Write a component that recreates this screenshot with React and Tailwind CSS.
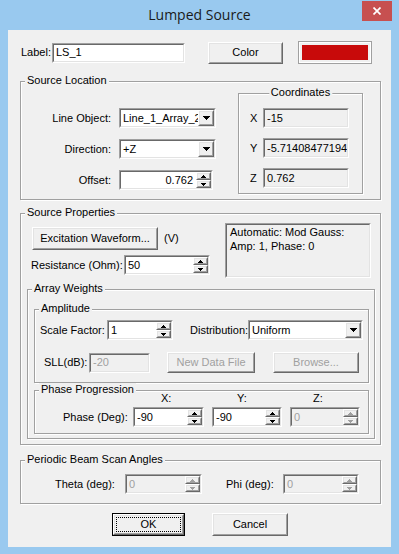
import React from "react";

// classic 3D edges (outer / inner rings)
const SUNK_OUT = "border-t-[#a0a0a0] border-l-[#a0a0a0] border-r-white border-b-white";
const SUNK_IN = "border-t-[#696969] border-l-[#696969] border-r-[#e3e3e3] border-b-[#e3e3e3]";
const RAISE_OUT = "border-t-white border-l-white border-r-[#696969] border-b-[#696969]";
const RAISE_IN = "border-t-[#e3e3e3] border-l-[#e3e3e3] border-r-[#a0a0a0] border-b-[#a0a0a0]";

const BigArrow = () => (
  <svg width="7" height="4" viewBox="0 0 7 4" shapeRendering="crispEdges">
    <rect x="0" y="0" width="7" height="1" fill="#000" />
    <rect x="1" y="1" width="5" height="1" fill="#000" />
    <rect x="2" y="2" width="3" height="1" fill="#000" />
    <rect x="3" y="3" width="1" height="1" fill="#000" />
  </svg>
);

const SmallArrow = ({ up, disabled }) => {
  const c = disabled ? "#a0a0a0" : "#000";
  return (
    <svg width="5" height="3" viewBox="0 0 5 3" shapeRendering="crispEdges">
      <rect x="0" y={up ? 2 : 0} width="5" height="1" fill={c} />
      <rect x="1" y="1" width="3" height="1" fill={c} />
      <rect x="2" y={up ? 0 : 2} width="1" height="1" fill={c} />
    </svg>
  );
};

const Button = ({ w, h = "h-[23px]", className = "", disabled, children }) => (
  <div className={`${w} ${h} border ${RAISE_OUT} bg-[#f0f0f0] shrink-0 ${className}`}>
    <div
      className={`w-full h-full border ${RAISE_IN} flex items-center justify-center ${
        disabled ? "text-[#a0a0a0]" : ""
      }`}
    >
      {children}
    </div>
  </div>
);

const SpinBtn = ({ up, disabled }) => (
  <div className={`w-[15px] h-[8px] border ${RAISE_OUT} bg-[#f0f0f0]`}>
    <div className={`w-full h-full border ${RAISE_IN} flex items-center justify-center`}>
      <SmallArrow up={up} disabled={disabled} />
    </div>
  </div>
);

const Edit = ({ w, h = "h-[20px]", value, right, disabled, readOnly, spin, combo, className = "" }) => (
  <div
    className={`${w} ${h} border ${SUNK_OUT} shrink-0 ${
      disabled || readOnly ? "bg-[#f0f0f0]" : "bg-white"
    } ${className}`}
  >
    <div className={`w-full h-full border ${SUNK_IN} flex`}>
      <div
        className={`flex-1 min-w-0 overflow-hidden whitespace-nowrap flex items-center ${
          right ? "justify-end pr-[3px]" : "pl-[2px]"
        } ${disabled ? "text-[#a0a0a0]" : ""}`}
      >
        {value}
      </div>
      {spin && (
        <div className="flex flex-col">
          <SpinBtn up disabled={disabled} />
          <SpinBtn disabled={disabled} />
        </div>
      )}
      {combo && (
        <div className={`w-[16px] h-full border ${RAISE_OUT} bg-[#f0f0f0]`}>
          <div className={`w-full h-full border ${RAISE_IN} flex items-center justify-center`}>
            <BigArrow />
          </div>
        </div>
      )}
    </div>
  </div>
);

// etched group box, caption sits over the top line
const Group = ({ title, center, className = "", children }) => (
  <div
    className={`relative border border-[#a0a0a0] shadow-[inset_1px_1px_0_#fff,1px_1px_0_#fff] shrink-0 ${className}`}
  >
    <span
      className={`absolute -top-[8px] px-[2px] bg-[#f0f0f0] leading-[13px] whitespace-nowrap ${
        center ? "left-1/2 -translate-x-1/2" : "left-[4px]"
      }`}
    >
      {title}
    </span>
    {children}
  </div>
);

export default function App() {
  return (
    <div className="w-[399px] h-[554px] bg-[#99c9ef] font-['Liberation_Sans',Arial,sans-serif] text-[11px] leading-[13px] text-black">
      {/* title bar */}
      <div className="relative h-[30px] flex items-center justify-center">
        <span className="font-['Open_Sans',sans-serif] text-[14px] leading-[20px] text-[#1a1a1a]">
          Lumped Source
        </span>
        <div className="absolute right-[7px] top-[1px] w-[30px] h-[20px] bg-[#c75050] flex items-center justify-center">
          <svg width="8" height="8" viewBox="0 0 8 8">
            <path d="M0.5 0.5L7.5 7.5M7.5 0.5L0.5 7.5" stroke="#fff" strokeWidth="1.7" />
          </svg>
        </div>
      </div>

      {/* client area */}
      <div className="ml-[8px] w-[383px] h-[517px] bg-[#f0f0f0] flex flex-col">
        <div className="flex items-center mt-[11px] h-[23px]">
          <span className="ml-[13px] w-[31px]">Label:</span>
          <Edit w="w-[133px]" value="LS_1" />
          <Button w="w-[75px]" h="h-[22px]" className="ml-[23px]">
            Color
          </Button>
          <div className="ml-[15px] w-[74px] h-[23px] border border-[#a0a0a0] p-[3px] shadow-[inset_1px_1px_0_#fff,inset_-1px_-1px_0_#fff]">
            <div className="w-full h-full bg-[#c80a0a]" />
          </div>
        </div>

        <Group title="Source Location" className="ml-[12px] mt-[17px] w-[361px] h-[119px]">
          <div className="flex items-start">
            <div className="w-[196px] flex flex-col pt-[26px] gap-[11px]">
              <div className="flex items-center h-[20px]">
                <span className="w-[90px] text-right">Line Object:</span>
                <Edit w="w-[97px]" className="ml-[8px]" value="Line_1_Array_2" combo />
              </div>
              <div className="flex items-center h-[20px]">
                <span className="w-[90px] text-right">Direction:</span>
                <Edit w="w-[97px]" className="ml-[8px]" value="+Z" combo />
              </div>
              <div className="flex items-center h-[20px]">
                <span className="w-[90px] text-right">Offset:</span>
                <Edit w="w-[94px]" className="ml-[8px]" value="0.762" right spin />
              </div>
            </div>
            <Group title="Coordinates" center className="ml-[21px] mt-[11px] w-[125px] h-[101px]">
              <div className="flex flex-col pt-[14px] gap-[10px]">
                {[
                  ["X", "-15"],
                  ["Y", "-5.71408477194"],
                  ["Z", "0.762"],
                ].map(([k, v]) => (
                  <div key={k} className="flex items-center h-[20px]">
                    <span className="w-[24px] pl-[11px]">{k}</span>
                    <Edit w="w-[86px]" value={v} readOnly />
                  </div>
                ))}
              </div>
            </Group>
          </div>
        </Group>

        <Group title="Source Properties" className="ml-[12px] mt-[13px] w-[361px] h-[232px]">
          <div className="flex items-start">
            <div className="ml-[10px] w-[194px] flex flex-col">
              <div className="flex items-center mt-[13px]">
                <Button w="w-[126px]" className="ml-[1px]">
                  Excitation Waveform...
                </Button>
                <span className="ml-[6px]">(V)</span>
              </div>
              <div className="flex items-center mt-[5px] h-[20px]">
                <span className="w-[93px]">Resistance (Ohm):</span>
                <Edit w="w-[86px]" value="50" spin />
              </div>
            </div>
            <div className={`mt-[9px] w-[146px] h-[55px] border ${SUNK_OUT}`}>
              <div className={`w-full h-full border ${SUNK_IN} pl-[3px]`}>
                <div className="leading-[14px]">Automatic: Mod Gauss:</div>
                <div className="leading-[14px]">Amp: 1, Phase: 0</div>
              </div>
            </div>
          </div>

          <Group title="Array Weights" className="ml-[6px] mt-[11px] w-[348px] h-[150px]">
            <Group title="Amplitude" className="ml-[6px] mt-[19px] w-[335px] h-[74px]">
              <div className="flex items-center mt-[10px] h-[20px]">
                <span className="ml-[5px] w-[67px]">Scale Factor:</span>
                <Edit w="w-[66px]" value="1" spin />
                <span className="ml-[17px] w-[58px]">Distribution:</span>
                <Edit w="w-[115px]" value="Uniform" combo />
              </div>
              <div className="flex items-center mt-[12px] h-[21px]">
                <span className="ml-[9px] w-[45px]">SLL(dB):</span>
                <Edit w="w-[61px]" value="-20" disabled />
                <Button w="w-[88px]" h="h-[21px]" className="ml-[17px]" disabled>
                  New Data File
                </Button>
                <Button w="w-[86px]" h="h-[21px]" className="ml-[18px]" disabled>
                  Browse...
                </Button>
              </div>
            </Group>
            <Group title="Phase Progression" className="ml-[6px] mt-[7px] w-[335px] h-[44px]">
              <div className="flex items-center h-[14px]">
                <span className="ml-[126px] w-[76px]">X:</span>
                <span className="w-[76px]">Y:</span>
                <span>Z:</span>
              </div>
              <div className="flex items-center mt-[2px] h-[20px]">
                <span className="ml-[28px] w-[70px]">Phase (Deg):</span>
                <Edit w="w-[71px]" value="-90" spin />
                <Edit w="w-[70px]" className="ml-[8px]" value="-90" spin />
                <Edit w="w-[70px]" className="ml-[8px]" value="0" spin disabled />
              </div>
            </Group>
          </Group>
        </Group>

        <Group title="Periodic Beam Scan Angles" className="ml-[12px] mt-[15px] w-[361px] h-[44px]">
          <div className="flex items-center mt-[13px] h-[20px]">
            <span className="ml-[34px] w-[70px]">Theta (deg):</span>
            <Edit w="w-[77px]" value="0" spin disabled />
            <span className="ml-[24px] w-[57px]">Phi (deg):</span>
            <Edit w="w-[76px]" value="0" spin disabled />
          </div>
        </Group>

        <div className="flex items-center mt-[9px]">
          <div className="ml-[104px] w-[73px] h-[23px] border border-black">
            <div className={`w-full h-full border ${RAISE_OUT} bg-[#f0f0f0]`}>
              <div className={`w-full h-full border ${RAISE_IN} p-[1px]`}>
                <div className="w-full h-full border border-dotted border-black flex items-center justify-center">
                  OK
                </div>
              </div>
            </div>
          </div>
          <Button w="w-[76px]" className="ml-[27px]">
            Cancel
          </Button>
        </div>
      </div>
    </div>
  );
}
